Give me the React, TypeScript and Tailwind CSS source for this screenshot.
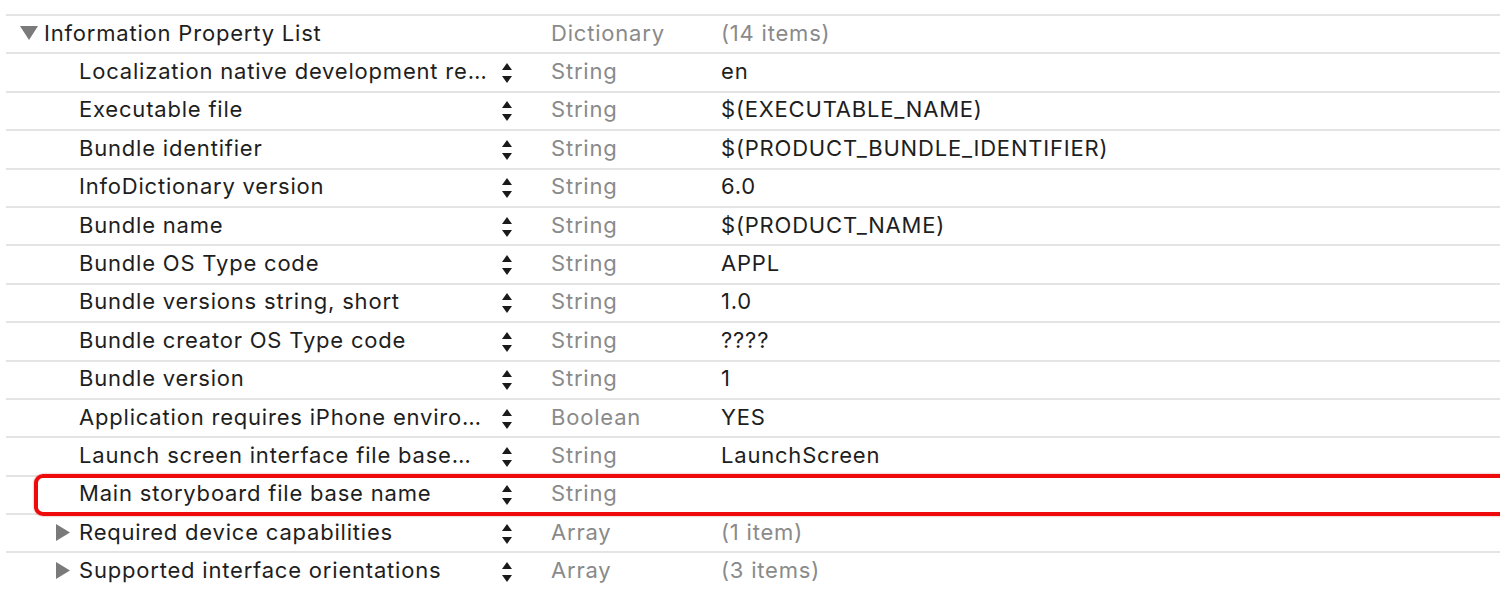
import React from 'react';

type Row = {
  key: string;
  type: string;
  value: string;
  muted?: boolean;
  disclosure?: 'open' | 'closed';
  root?: boolean;
  highlight?: boolean;
};

const rows: Row[] = [
  { key: 'Information Property List', type: 'Dictionary', value: '(14 items)', muted: true, disclosure: 'open', root: true },
  { key: 'Localization native development re…', type: 'String', value: 'en' },
  { key: 'Executable file', type: 'String', value: '$(EXECUTABLE_NAME)' },
  { key: 'Bundle identifier', type: 'String', value: '$(PRODUCT_BUNDLE_IDENTIFIER)' },
  { key: 'InfoDictionary version', type: 'String', value: '6.0' },
  { key: 'Bundle name', type: 'String', value: '$(PRODUCT_NAME)' },
  { key: 'Bundle OS Type code', type: 'String', value: 'APPL' },
  { key: 'Bundle versions string, short', type: 'String', value: '1.0' },
  { key: 'Bundle creator OS Type code', type: 'String', value: '????' },
  { key: 'Bundle version', type: 'String', value: '1' },
  { key: 'Application requires iPhone enviro…', type: 'Boolean', value: 'YES' },
  { key: 'Launch screen interface file base…', type: 'String', value: 'LaunchScreen' },
  { key: 'Main storyboard file base name', type: 'String', value: '', highlight: true },
  { key: 'Required device capabilities', type: 'Array', value: '(1 item)', muted: true, disclosure: 'closed' },
  { key: 'Supported interface orientations', type: 'Array', value: '(3 items)', muted: true, disclosure: 'closed' },
];

const Stepper = () => (
  <svg width="12" height="24" viewBox="0 0 12 24" className="block mt-[3px]">
    <path d="M6 2 L11 9 L1 9 Z" fill="#1a1a1a" />
    <path d="M1 15 L11 15 L6 22 Z" fill="#1a1a1a" />
  </svg>
);

const TriangleDown = () => (
  <svg width="18" height="14" viewBox="0 0 18 14" className="block">
    <path d="M0 0 L18 0 L9 14 Z" fill="#7a7a7a" />
  </svg>
);

const TriangleRight = () => (
  <svg width="14" height="17" viewBox="0 0 14 17" className="block">
    <path d="M0 0 L14 8.5 L0 17 Z" fill="#7a7a7a" />
  </svg>
);

export default function App() {
  return (
    <div
      className="w-[1500px] h-[610px] bg-white overflow-hidden text-[22px] tracking-[0.8px] text-[#1e1e1e]"
      style={{ fontFamily: 'Inter, "Liberation Sans", sans-serif' }}
    >
      <div className="ml-[6px] pt-[14px] flex flex-col">
        {rows.map((row, i) => (
          <div key={i} className="relative h-[38.4px] border-t-2 border-[#e4e4e4] flex items-center pb-[2px]">
            {/* key column */}
            <div className="w-[489px] flex items-center">
              {row.root ? (
                <div className="pl-[14px] flex items-center gap-[6px]">
                  <TriangleDown />
                  <span>{row.key}</span>
                </div>
              ) : row.disclosure === 'closed' ? (
                <div className="pl-[50px] flex items-center gap-[9px]">
                  <TriangleRight />
                  <span>{row.key}</span>
                </div>
              ) : (
                <span className="pl-[73px] whitespace-nowrap">{row.key}</span>
              )}
            </div>
            {/* stepper */}
            <div className="w-[24px] flex justify-center">{!row.root && <Stepper />}</div>
            <div className="w-[32px]" />
            {/* type */}
            <div className="w-[170px] text-[#8a8a8a]">{row.type}</div>
            {/* value */}
            <div className={row.muted ? 'flex-1 text-[#8a8a8a]' : 'flex-1'}>{row.value}</div>
            {row.highlight && (
              <div className="absolute z-10 left-[28px] -right-[20px] -top-[3px] -bottom-[3px] border-[4px] border-[#ee0a0a] rounded-[9px] shadow-[0_0_2px_rgba(160,0,0,0.5)] pointer-events-none" />
            )}
          </div>
        ))}
      </div>
    </div>
  );
}
